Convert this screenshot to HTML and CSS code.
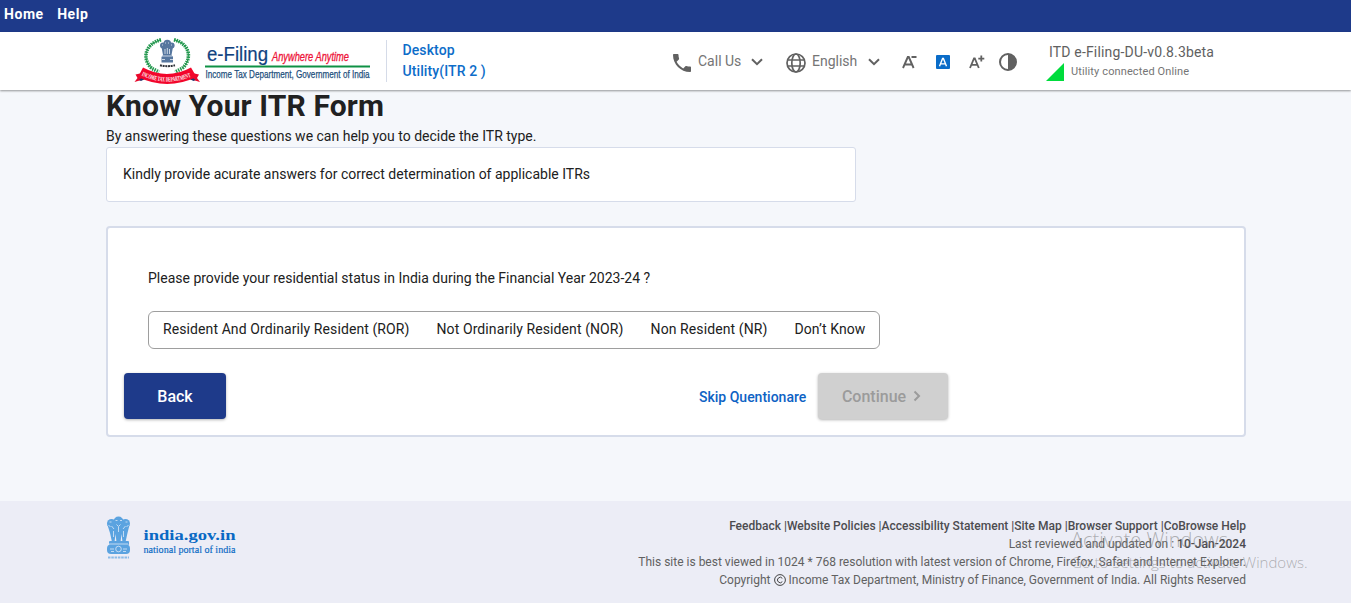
FILE: index.html
```html
<!DOCTYPE html>
<html lang="en">
<head>
<meta charset="utf-8">
<title>Know Your ITR Form</title>
<link rel="stylesheet" href="styles.css">
</head>
<body>
<nav class="topbar"><a>Home</a><a>Help</a></nav>
<header class="header">
  <svg class="logo" width="238" height="54" viewBox="134 34 238 54">
    <g fill="none" stroke="#23984e">
      <path d="M161 39.800C144 44 142 60 152 68.500L159 72" stroke-width="3.600" stroke-dasharray="1.500 .9"/>
      <path d="M174 39.800C191 44 192 60 182 68.500L175 72" stroke-width="3.600" stroke-dasharray="1.500 .9"/>
      <path d="M161 39.800C144 44 142 60 152 68.500M174 39.800C191 44 192 60 182 68.500" stroke-width="1"/>
    </g>
    <g fill="#56769e">
      <circle cx="167.300" cy="43.500" r="3.800"/><circle cx="163" cy="45.500" r="3"/><circle cx="171.600" cy="45.500" r="3"/>
      <path d="M161.500 47h11.500l-1.500 8 1.500 2v5.500h-11.500V57l1.500-2z"/>
    </g>
    <g stroke="#e9eff6" stroke-width=".8" fill="none">
      <path d="M165 49v5M167.300 48v6M169.500 49v5M162 56h10M162 59.500h3M170 59.500h3M165 43h1M168 43h1M162 45h1M171 45h1"/>
    </g>
    <path d="M160 65.300Q167 67 175 65.300" fill="none" stroke="#31343b" stroke-width="2" stroke-dasharray="2 .7"/>
    <path d="M134.500 82l3-4-2-3.500 9-2 2 6zM200 82l-3-4 2-3.500-9-2-2 6z" fill="#e8082b"/>
    <path d="M139 80l5-4 2 2.500-5 2.500zM195.500 80l-5-4-2 2.500 5 2.500z" fill="#24366f"/>
    <path d="M143 67.500Q167 80.500 191 67.500L196.500 77Q167 91 138 77z" fill="#f2062b"/>
    <path id="ribbonText" d="M141.500 75.600Q167 87.500 194 75.600" fill="none"/>
    <text class="ribbon-text"><textPath href="#ribbonText" textLength="51" lengthAdjust="spacingAndGlyphs">INCOME TAX DEPARTMENT</textPath></text>
    <text class="brand" x="207" y="60.500" textLength="61" lengthAdjust="spacingAndGlyphs">e-Filing</text>
    <text class="slogan" x="272" y="61" textLength="77" lengthAdjust="spacingAndGlyphs">Anywhere Anytime</text>
    <path d="M205 66.500h165" stroke="#0f9145" stroke-width="2"/>
    <text class="dept" x="205.500" y="77.500" textLength="164" lengthAdjust="spacingAndGlyphs">Income Tax Department, Government of India</text>
  </svg>
  <div class="utility">Desktop<br>Utility(ITR 2 )</div>
  <div class="tools">
    <svg class="phone" width="18" height="18" viewBox="3 3 18 18"><path fill="#616161" d="M6.620 10.790c1.440 2.830 3.760 5.140 6.590 6.590l2.200-2.200c.27-.27.670-.36 1.020-.24 1.120.37 2.330.57 3.570.57.550 0 1 .45 1 1V20c0 .55-.45 1-1 1-9.390 0-17-7.610-17-17 0-.55.450-1 1-1h3.500c.55 0 1 .45 1 1 0 1.250.2 2.450.57 3.570.11.350.03.740-.25 1.020l-2.200 2.200z"/></svg>
    <span class="tool-label call">Call Us</span>
    <svg class="chev" width="12" height="8" viewBox="0 0 12 8"><path d="M1 1.200l5 5 5-5" fill="none" stroke="#616161" stroke-width="2"/></svg>
    <svg class="globe" width="20" height="20" viewBox="0 0 20 20"><g fill="none" stroke="#616161" stroke-width="1.700"><circle cx="10" cy="10" r="9"/><ellipse cx="10" cy="10" rx="4.200" ry="9"/><path d="M1.500 7h17M1.500 13h17"/></g></svg>
    <span class="tool-label lang">English</span>
    <svg class="chev" width="12" height="8" viewBox="0 0 12 8"><path d="M1 1.200l5 5 5-5" fill="none" stroke="#616161" stroke-width="2"/></svg>
    <svg class="a-minus" width="16" height="14" viewBox="0 0 16 14"><path d="M1 13L5.800 2h1L11.600 13M2.800 9.500h7M9.500 2h5" fill="none" stroke="#616161" stroke-width="1.900"/></svg>
    <svg class="a-normal" width="14" height="14" viewBox="0 0 14 14"><rect width="14" height="14" rx="1" fill="#0a6cc8"/><path d="M3.500 11.300L6.600 3.500h.8l3.100 7.800M4.700 8.900h4.600" fill="none" stroke="#fff" stroke-width="1.400"/></svg>
    <svg class="a-plus" width="16" height="14" viewBox="0 0 16 14"><path d="M1 13L5 3.500h.8L9.800 13M2.600 9.800h5.800M9.300 3.600h6M12.300.6v6" fill="none" stroke="#616161" stroke-width="1.800"/></svg>
    <svg class="contrast" width="18" height="18" viewBox="0 0 18 18"><circle cx="9" cy="9" r="8" fill="none" stroke="#616161" stroke-width="2"/><path d="M9 1a8 8 0 0 1 0 16z" fill="#616161"/></svg>
  </div>
  <div class="status">
    <div class="version">ITD e-Filing-DU-v0.8.3beta</div>
    <div class="online"><svg width="18" height="18" viewBox="0 0 18 18"><path d="M18 0v18H0z" fill="#00dc3c"/></svg><span>Utility connected Online</span></div>
  </div>
</header>
<main class="main">
  <h1>Know Your ITR Form</h1>
  <p class="intro">By answering these questions we can help you to decide the ITR type.</p>
  <div class="notice">Kindly provide acurate answers for correct determination of applicable ITRs</div>
  <section class="card">
    <p class="question">Please provide your residential status in India during the Financial Year 2023-24 ?</p>
    <div class="options"><span>Resident And Ordinarily Resident (ROR)</span><span>Not Ordinarily Resident (NOR)</span><span>Non Resident (NR)</span><span>Don’t Know</span></div>
    <div class="actions">
      <button class="btn back">Back</button>
      <a class="skip">Skip Quentionare</a>
      <button class="btn continue"><span>Continue</span><svg width="8" height="12" viewBox="0 0 8 12"><path d="M1.500 1.500L6 6l-4.500 4.500" fill="none" stroke="#9b9b9b" stroke-width="2"/></svg></button>
    </div>
  </section>
</main>
<footer class="footer">
  <svg class="portal" width="132" height="46" viewBox="0 0 132 46">
    <g fill="#5ba3e0"><circle cx="12.500" cy="5.500" r="5"/><circle cx="5.500" cy="7.500" r="4.500"/><circle cx="19.500" cy="7.500" r="4.500"/><path d="M1.500 9h22l-2 8-2 9h-3l-1-8-1 8h-4l-1-8-1 8H6l-2-9z"/><rect x="3" y="25" width="20" height="4" rx="1"/><rect x="1" y="28.500" width="23" height="9.500" rx="4"/></g>
    <g fill="none" stroke="#dce9f8" stroke-width=".8"><path d="M3.500 6h2M2.500 9l2 2M9.500 4.500h2M14 4.500h2M19.500 6h2M22.500 9l-2 2M5.500 10l2.500 3M10.500 8.500l2 2 2-2M12.500 11v5M19.500 10L17 13M7.500 15v6M17.500 15v6M3 28h19M4 33h4M17 33h4M5 35.500h3M17 35.500h3"/><circle cx="12.500" cy="33" r="2.800"/></g>
    <path d="M2 41.500h21" stroke="#8bbbe8" stroke-width="2" stroke-dasharray="2.500 .8"/>
    <text class="portal-name" x="37.500" y="24" textLength="92" lengthAdjust="spacingAndGlyphs">india.gov.in</text>
    <text class="portal-sub" x="37.500" y="37" textLength="92" lengthAdjust="spacingAndGlyphs">national portal of india</text>
  </svg>
  <div class="legal">
    <div class="links">Feedback |Website Policies |Accessibility Statement |Site Map |Browser Support |CoBrowse Help</div>
    <div>Last reviewed and updated on : <b>10-Jan-2024</b></div>
    <div>This site is best viewed in 1024 * 768 resolution with latest version of Chrome, Firefox, Safari and Internet Explorer.</div>
    <div>Copyright <svg class="copy" width="12" height="12" viewBox="0 0 12 12"><g fill="none" stroke="#444"><circle cx="6" cy="6" r="5.400"/><path d="M8.300 4.300a2.700 2.700 0 1 0 0 3.400"/></g></svg> Income Tax Department, Ministry of Finance, Government of India. All Rights Reserved</div>
  </div>
</footer>
<div class="watermark"><div class="wm-title">Activate Windows</div><div class="wm-sub">Go to Settings to activate Windows.</div></div>
</body>
</html>
```
FILE: styles.css
```css
* { box-sizing: border-box; }
body { margin: 0; height: 603px; overflow: hidden; position: relative; background: #f5f7fb; font-family: Roboto, sans-serif; font-size: 14px; color: #212121; }
p, h1 { margin: 0; }
svg { display: block; flex: none; }
.topbar { height: 32px; background: #1e3a8a; color: #fff; display: flex; gap: 13.500px; padding: 5px 4px; font-size: 14px; line-height: 18px; font-weight: 700; letter-spacing: .55px; }
.header { height: 58px; background: #fff; display: flex; padding-left: 134px; box-shadow: 0 1px 2px rgba(0,0,0,.4); position: relative; }
.logo { margin-top: 2px; }
.ribbon-text { font: 700 6.500px "Liberation Serif", serif; fill: #fff; }
.brand { font: 20px "Liberation Sans", sans-serif; fill: #11427f; stroke: #11427f; stroke-width: .2px; }
.slogan { font: italic 12px "Liberation Sans", sans-serif; fill: #ee1238; stroke: #ee1238; stroke-width: .3px; }
.dept { font: 11px "Liberation Sans", sans-serif; fill: #1d4f7c; stroke: #1d4f7c; stroke-width: .25px; }
.utility { margin: 8px 0 0 14px; border-left: 1px solid #d5dbe8; height: 42px; width: 286px; padding-left: 15.500px; color: #0d6dc9; font-weight: 500; line-height: 21px; letter-spacing: .1px; }
.tools { display: flex; align-items: center; margin-top: 1px; width: 360px; height: 58px; margin-left: 1px; }
.phone { margin-top: 2px; }
.tool-label { color: #757575; margin-bottom: 2px; }
.call { margin-left: 7px; width: 53px; }
.globe { margin-left: 23px; margin-top: 2px; }
.lang { margin-left: 6px; width: 56px; }
.a-minus { margin-left: 22px; }
.a-normal { margin-left: 18px; }
.a-plus { margin-left: 19px; }
.contrast { margin-left: 14px; }
.status { padding-top: 11px; margin-left: 13px; color: #616161; white-space: nowrap; }
.version { padding-left: 3px; line-height: 18px; letter-spacing: .17px; }
.online { display: flex; gap: 7px; margin-top: 2px; font-size: 11px; line-height: 18px; letter-spacing: .12px; color: #757575; }
.main { padding: 0 105px 0 106px; height: 411px; }
h1 { font-size: 30px; line-height: 31px; font-weight: 700; letter-spacing: .13px; }
.intro { line-height: 20px; padding-top: 5px; }
.notice { width: 750px; height: 55px; margin-top: 1px; background: #fff; border: 1px solid #d6dcea; border-radius: 3px; padding: 16px; line-height: 20px; }
.card { margin-top: 24px; height: 211px; border: 2px solid #d6dcea; border-radius: 4px; background: #fff; padding: 40px 40px 0; }
.question { line-height: 20px; }
.options { margin-top: 23px; width: 732px; height: 38px; border: 1px solid #9e9e9e; border-radius: 6px; padding: 0 14px; display: flex; gap: 27px; line-height: 34px; white-space: nowrap; letter-spacing: .095px; }
.actions { margin: 24px 0 0 -24px; display: flex; align-items: center; }
.btn { height: 46px; border: 0; border-radius: 4px; font-family: Roboto, sans-serif; font-size: 16px; font-weight: 500; display: flex; align-items: center; justify-content: center; box-shadow: 0 1px 3px rgba(0,0,0,.3); padding: 0; }
.back { width: 102px; background: #1e3a8a; color: #fff; }
.skip { margin-left: 473px; width: 119px; padding-top: 2px; color: #0d62c4; font-weight: 500; white-space: nowrap; }
.continue { width: 130px; background: #d0d0d0; color: #9b9b9b; gap: 7px; padding-right: 3px; }
.footer { height: 102px; background: #ecedf6; display: flex; justify-content: space-between; padding: 15px 105px 0 106px; }
.portal-name { font: 700 15px "Liberation Serif", serif; fill: #0969c4; }
.portal-sub { font: 10px "Liberation Serif", serif; fill: #0969c4; stroke: #0969c4; stroke-width: .15px; }
.legal { padding-top: 1px; text-align: right; font-size: 12px; line-height: 18px; color: #616161; white-space: nowrap; }
.links, .legal b { font-weight: 500; color: #4c4c50; }
.copy { display: inline-block; vertical-align: -2px; }
.watermark { position: absolute; left: 1071px; top: 527px; color: rgba(120,120,120,.55); font-family: "Open Sans", sans-serif; font-weight: 300; white-space: nowrap; }
.wm-title { font-size: 20px; line-height: 25px; }
.wm-sub { font-size: 15px; line-height: 20px; }
```
